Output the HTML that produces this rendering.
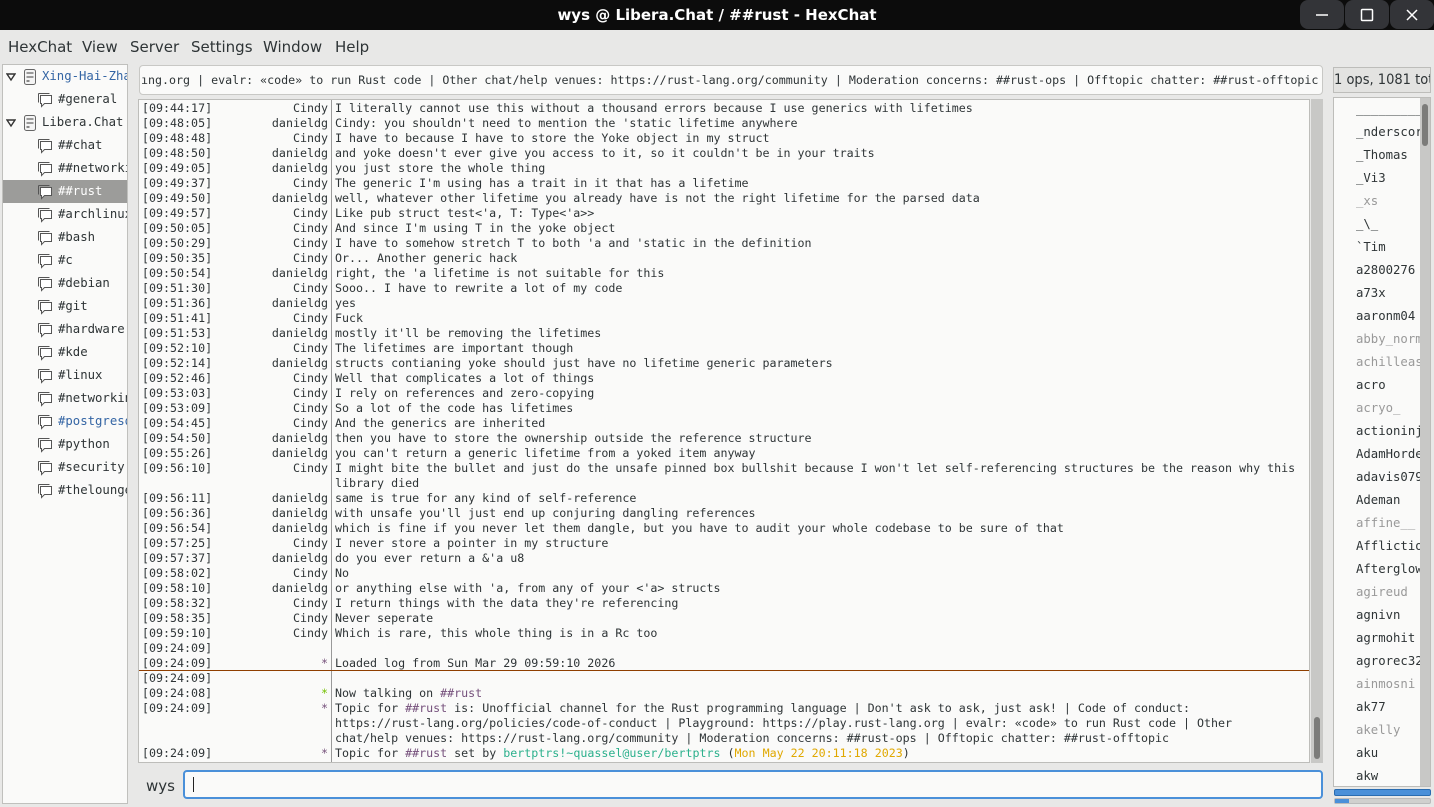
<!DOCTYPE html>
<html><head><meta charset="utf-8"><style>
*{margin:0;padding:0;box-sizing:border-box}
body{width:1434px;height:807px;background:#e8e8e7;font-family:"DejaVu Sans Mono","Liberation Mono",monospace;color:#2e3436;position:relative;overflow:hidden}
.abs{position:absolute}
#title{left:0;top:0;width:1434px;height:30px;background:#0c0c0c;color:#fff;font:bold 15px "DejaVu Sans","Liberation Sans",sans-serif;text-align:center;line-height:30px}
.wb{top:0;width:44px;height:29px;background:#333438;border-radius:8px}
.wb svg{position:absolute;left:14px;top:7px}
#menu{left:0;top:30px;height:32px;width:1434px;font:15px "DejaVu Sans","Liberation Sans",sans-serif;color:#2e3436}
#menu span{position:absolute;top:8px}
#tree{left:2px;top:64px;width:126px;height:740px;background:#fafaf9;border:1px solid #c0c0bd;overflow:hidden;font-size:12.3px}
.ti{position:absolute;height:23px;line-height:23px;white-space:nowrap;left:0;width:126px}
.ti svg{position:absolute;top:4px}
.tx{position:absolute;left:55px}
.sx{position:absolute;left:39px}
#topic{left:139px;top:65px;width:1184px;height:30px;background:#fafaf9;border:1px solid #c8c8c5;border-radius:4px;font-size:11.65px;line-height:28px;white-space:nowrap;overflow:hidden;padding-left:1px}
#chat{left:138px;top:99px;width:1172px;height:664px;background:#fafaf9;border:1px solid #bdbdba;overflow:hidden;font-size:11.65px}
.r{position:absolute;left:0;height:15px;line-height:15px;white-space:pre;width:1170px}
.t{position:absolute;left:3px}
.n{position:absolute;left:0;width:189px;text-align:right}
.m{position:absolute;left:196px}
#sep{left:192px;top:0;width:1px;height:664px;background:#999}
#sb{left:1311px;top:99px;width:12px;height:664px;background:#c8c8c6}
#input{left:183px;top:770px;width:1140px;height:29px;background:#fafaf9;border:2px solid #4a90d9;border-radius:4px}
#ul{left:1333px;top:67px;width:98px;height:26px;border:1px solid #bdbdba;background:#e3e3e1;font:14.5px "DejaVu Sans Condensed","Liberation Sans Narrow","Liberation Sans",sans-serif;line-height:24px;white-space:nowrap;overflow:hidden}
#nl{left:1333px;top:97px;width:98px;height:690px;background:#fafaf9;border:1px solid #bdbdba;overflow:hidden;font-size:12.3px}
.u{position:absolute;left:22px;height:23px;line-height:23px;white-space:nowrap}
.g{color:#999}
</style></head><body>
<svg width="0" height="0" style="position:absolute"><defs>
<symbol id="bub" viewBox="0 0 16 16"><path d="M3.5 3.5h11v8h-7l-3 3v-3h-1z" fill="#fff" stroke="#555" stroke-width="1"/><path d="M1.5 1.5h11" stroke="#555" fill="none"/><path d="M1.5 1.5v9" stroke="#555"/></symbol>
<symbol id="srv" viewBox="0 0 14 16"><rect x="1.5" y="0.5" width="11" height="15" rx="2" fill="#f4f4f4" stroke="#666"/><rect x="3.5" y="3" width="7" height="2" fill="#999"/><rect x="3.5" y="7" width="7" height="2" fill="#999"/><rect x="3.5" y="11" width="3" height="2" fill="#888"/></symbol>
<symbol id="tri" viewBox="0 0 10 10"><path d="M1 2h8L5 8z" fill="none" stroke="#333" stroke-width="1.4"/></symbol>
</defs></svg>
<div id="title" class="abs">wys @ Libera.Chat / ##rust - HexChat</div>
<div class="abs wb" style="left:1300px"><svg width="16" height="16"><path d="M2 8h12" stroke="#fff" stroke-width="1.5"/></svg></div>
<div class="abs wb" style="left:1345px"><svg width="16" height="16"><rect x="2.5" y="2.5" width="11" height="11" rx="1" fill="none" stroke="#fff" stroke-width="1.5"/></svg></div>
<div class="abs wb" style="left:1390px"><svg width="16" height="16"><path d="M3 3l10 10M13 3L3 13" stroke="#fff" stroke-width="1.5"/></svg></div>
<div id="menu" class="abs"><span style="left:8px">HexChat</span><span style="left:82px">View</span><span style="left:130px">Server</span><span style="left:191px">Settings</span><span style="left:263px">Window</span><span style="left:335px">Help</span></div>

<div id="tree" class="abs">
<div class="ti" style="top:0"><svg style="left:3px;top:7px" width="10" height="10"><use href="#tri"/></svg><svg style="left:20px" width="14" height="16"><use href="#srv"/></svg><span class="sx" style="color:#3465a4">Xing-Hai-Zhang</span></div>
<div class="ti" style="top:23px"><svg style="left:34px" width="16" height="16"><use href="#bub"/></svg><span class="tx">#general</span></div>
<div class="ti" style="top:46px"><svg style="left:3px;top:7px" width="10" height="10"><use href="#tri"/></svg><svg style="left:20px" width="14" height="16"><use href="#srv"/></svg><span class="sx">Libera.Chat</span></div>
<div class="ti" style="top:69px"><svg style="left:34px" width="16" height="16"><use href="#bub"/></svg><span class="tx">##chat</span></div>
<div class="ti" style="top:92px"><svg style="left:34px" width="16" height="16"><use href="#bub"/></svg><span class="tx">##networking</span></div>
<div class="ti" style="top:115px;background:#9c9c9a;color:#fff"><svg style="left:34px" width="16" height="16"><use href="#bub"/></svg><span class="tx">##rust</span></div>
<div class="ti" style="top:138px"><svg style="left:34px" width="16" height="16"><use href="#bub"/></svg><span class="tx">#archlinux</span></div>
<div class="ti" style="top:161px"><svg style="left:34px" width="16" height="16"><use href="#bub"/></svg><span class="tx">#bash</span></div>
<div class="ti" style="top:184px"><svg style="left:34px" width="16" height="16"><use href="#bub"/></svg><span class="tx">#c</span></div>
<div class="ti" style="top:207px"><svg style="left:34px" width="16" height="16"><use href="#bub"/></svg><span class="tx">#debian</span></div>
<div class="ti" style="top:230px"><svg style="left:34px" width="16" height="16"><use href="#bub"/></svg><span class="tx">#git</span></div>
<div class="ti" style="top:253px"><svg style="left:34px" width="16" height="16"><use href="#bub"/></svg><span class="tx">#hardware</span></div>
<div class="ti" style="top:276px"><svg style="left:34px" width="16" height="16"><use href="#bub"/></svg><span class="tx">#kde</span></div>
<div class="ti" style="top:299px"><svg style="left:34px" width="16" height="16"><use href="#bub"/></svg><span class="tx">#linux</span></div>
<div class="ti" style="top:322px"><svg style="left:34px" width="16" height="16"><use href="#bub"/></svg><span class="tx">#networking</span></div>
<div class="ti" style="top:345px;color:#3465a4"><svg style="left:34px" width="16" height="16"><use href="#bub"/></svg><span class="tx">#postgresql</span></div>
<div class="ti" style="top:368px"><svg style="left:34px" width="16" height="16"><use href="#bub"/></svg><span class="tx">#python</span></div>
<div class="ti" style="top:391px"><svg style="left:34px" width="16" height="16"><use href="#bub"/></svg><span class="tx">#security</span></div>
<div class="ti" style="top:414px"><svg style="left:34px" width="16" height="16"><use href="#bub"/></svg><span class="tx">#thelounge</span></div>
</div>

<div id="topic" class="abs">ıng.org | evalr: «code» to run Rust code | Other chat/help venues: https://rust-lang.org/community | Moderation concerns: ##rust-ops | Offtopic chatter: ##rust-offtopic</div>

<div id="chat" class="abs">
<div id="sep" class="abs"></div>
<div class="r" style="top:1px"><span class="t">[09:44:17]</span><span class="n">Cindy</span><span class="m">I literally cannot use this without a thousand errors because I use generics with lifetimes</span></div>
<div class="r" style="top:16px"><span class="t">[09:48:05]</span><span class="n">danieldg</span><span class="m">Cindy: you shouldn't need to mention the 'static lifetime anywhere</span></div>
<div class="r" style="top:31px"><span class="t">[09:48:48]</span><span class="n">Cindy</span><span class="m">I have to because I have to store the Yoke object in my struct</span></div>
<div class="r" style="top:46px"><span class="t">[09:48:50]</span><span class="n">danieldg</span><span class="m">and yoke doesn't ever give you access to it, so it couldn't be in your traits</span></div>
<div class="r" style="top:61px"><span class="t">[09:49:05]</span><span class="n">danieldg</span><span class="m">you just store the whole thing</span></div>
<div class="r" style="top:76px"><span class="t">[09:49:37]</span><span class="n">Cindy</span><span class="m">The generic I'm using has a trait in it that has a lifetime</span></div>
<div class="r" style="top:91px"><span class="t">[09:49:50]</span><span class="n">danieldg</span><span class="m">well, whatever other lifetime you already have is not the right lifetime for the parsed data</span></div>
<div class="r" style="top:106px"><span class="t">[09:49:57]</span><span class="n">Cindy</span><span class="m">Like pub struct test&lt;'a, T: Type&lt;'a&gt;&gt;</span></div>
<div class="r" style="top:121px"><span class="t">[09:50:05]</span><span class="n">Cindy</span><span class="m">And since I'm using T in the yoke object</span></div>
<div class="r" style="top:136px"><span class="t">[09:50:29]</span><span class="n">Cindy</span><span class="m">I have to somehow stretch T to both 'a and 'static in the definition</span></div>
<div class="r" style="top:151px"><span class="t">[09:50:35]</span><span class="n">Cindy</span><span class="m">Or... Another generic hack</span></div>
<div class="r" style="top:166px"><span class="t">[09:50:54]</span><span class="n">danieldg</span><span class="m">right, the 'a lifetime is not suitable for this</span></div>
<div class="r" style="top:181px"><span class="t">[09:51:30]</span><span class="n">Cindy</span><span class="m">Sooo.. I have to rewrite a lot of my code</span></div>
<div class="r" style="top:196px"><span class="t">[09:51:36]</span><span class="n">danieldg</span><span class="m">yes</span></div>
<div class="r" style="top:211px"><span class="t">[09:51:41]</span><span class="n">Cindy</span><span class="m">Fuck</span></div>
<div class="r" style="top:226px"><span class="t">[09:51:53]</span><span class="n">danieldg</span><span class="m">mostly it'll be removing the lifetimes</span></div>
<div class="r" style="top:241px"><span class="t">[09:52:10]</span><span class="n">Cindy</span><span class="m">The lifetimes are important though</span></div>
<div class="r" style="top:256px"><span class="t">[09:52:14]</span><span class="n">danieldg</span><span class="m">structs contianing yoke should just have no lifetime generic parameters</span></div>
<div class="r" style="top:271px"><span class="t">[09:52:46]</span><span class="n">Cindy</span><span class="m">Well that complicates a lot of things</span></div>
<div class="r" style="top:286px"><span class="t">[09:53:03]</span><span class="n">Cindy</span><span class="m">I rely on references and zero-copying</span></div>
<div class="r" style="top:301px"><span class="t">[09:53:09]</span><span class="n">Cindy</span><span class="m">So a lot of the code has lifetimes</span></div>
<div class="r" style="top:316px"><span class="t">[09:54:45]</span><span class="n">Cindy</span><span class="m">And the generics are inherited</span></div>
<div class="r" style="top:331px"><span class="t">[09:54:50]</span><span class="n">danieldg</span><span class="m">then you have to store the ownership outside the reference structure</span></div>
<div class="r" style="top:346px"><span class="t">[09:55:26]</span><span class="n">danieldg</span><span class="m">you can't return a generic lifetime from a yoked item anyway</span></div>
<div class="r" style="top:361px"><span class="t">[09:56:10]</span><span class="n">Cindy</span><span class="m">I might bite the bullet and just do the unsafe pinned box bullshit because I won't let self-referencing structures be the reason why this</span></div>
<div class="r" style="top:376px"><span class="m">library died</span></div>
<div class="r" style="top:391px"><span class="t">[09:56:11]</span><span class="n">danieldg</span><span class="m">same is true for any kind of self-reference</span></div>
<div class="r" style="top:406px"><span class="t">[09:56:36]</span><span class="n">danieldg</span><span class="m">with unsafe you'll just end up conjuring dangling references</span></div>
<div class="r" style="top:421px"><span class="t">[09:56:54]</span><span class="n">danieldg</span><span class="m">which is fine if you never let them dangle, but you have to audit your whole codebase to be sure of that</span></div>
<div class="r" style="top:436px"><span class="t">[09:57:25]</span><span class="n">Cindy</span><span class="m">I never store a pointer in my structure</span></div>
<div class="r" style="top:451px"><span class="t">[09:57:37]</span><span class="n">danieldg</span><span class="m">do you ever return a &amp;'a u8</span></div>
<div class="r" style="top:466px"><span class="t">[09:58:02]</span><span class="n">Cindy</span><span class="m">No</span></div>
<div class="r" style="top:481px"><span class="t">[09:58:10]</span><span class="n">danieldg</span><span class="m">or anything else with 'a, from any of your &lt;'a&gt; structs</span></div>
<div class="r" style="top:496px"><span class="t">[09:58:32]</span><span class="n">Cindy</span><span class="m">I return things with the data they're referencing</span></div>
<div class="r" style="top:511px"><span class="t">[09:58:35]</span><span class="n">Cindy</span><span class="m">Never seperate</span></div>
<div class="r" style="top:526px"><span class="t">[09:59:10]</span><span class="n">Cindy</span><span class="m">Which is rare, this whole thing is in a Rc too</span></div>
<div class="r" style="top:541px"><span class="t">[09:24:09]</span></div>
<div class="r" style="top:556px"><span class="t">[09:24:09]</span><span class="n" style="color:#75507b">*</span><span class="m">Loaded log from Sun Mar 29 09:59:10 2026</span></div>
<div class="abs" style="left:0;top:570px;width:1170px;height:1px;background:#8f3f00"></div>
<div class="r" style="top:571px"><span class="t">[09:24:09]</span></div>
<div class="r" style="top:586px"><span class="t">[09:24:08]</span><span class="n" style="color:#73c000">*</span><span class="m">Now talking on <span style="color:#75507b">##rust</span></span></div>
<div class="r" style="top:601px"><span class="t">[09:24:09]</span><span class="n" style="color:#75507b">*</span><span class="m">Topic for <span style="color:#75507b">##rust</span> is: Unofficial channel for the Rust programming language | Don't ask to ask, just ask! | Code of conduct:</span></div>
<div class="r" style="top:616px"><span class="m">https://rust-lang.org/policies/code-of-conduct | Playground: https://play.rust-lang.org | evalr: «code» to run Rust code | Other</span></div>
<div class="r" style="top:631px"><span class="m">chat/help venues: https://rust-lang.org/community | Moderation concerns: ##rust-ops | Offtopic chatter: ##rust-offtopic</span></div>
<div class="r" style="top:646px"><span class="t">[09:24:09]</span><span class="n" style="color:#75507b">*</span><span class="m">Topic for <span style="color:#75507b">##rust</span> set by <span style="color:#2bb08c">bertptrs!~quassel@user/bertptrs</span> (<span style="color:#e0a800">Mon May 22 20:11:18 2023</span>)</span></div>
</div>
<div id="sb" class="abs"><div class="abs" style="left:3px;top:618px;width:6px;height:42px;background:#7c7c7a;border-radius:3px"></div></div>

<div class="abs" style="left:146px;top:777px;font:15px 'DejaVu Sans',sans-serif">wys</div>
<div id="input" class="abs"><div class="abs" style="left:8px;top:5px;width:1px;height:15px;background:#222"></div></div>

<div id="ul" class="abs">1 ops, 1081 total</div>
<div id="nl" class="abs">
<div class="u" style="top:0">__________</div>
<div class="u" style="top:23px">_nderscore</div>
<div class="u" style="top:46px">_Thomas</div>
<div class="u" style="top:69px">_Vi3</div>
<div class="u g" style="top:92px">_xs</div>
<div class="u" style="top:115px">_\_</div>
<div class="u" style="top:138px">`Tim</div>
<div class="u" style="top:161px">a2800276</div>
<div class="u" style="top:184px">a73x</div>
<div class="u" style="top:207px">aaronm04</div>
<div class="u g" style="top:230px">abby_normal</div>
<div class="u g" style="top:253px">achilleas</div>
<div class="u" style="top:276px">acro</div>
<div class="u g" style="top:299px">acryo_</div>
<div class="u" style="top:322px">actioninja</div>
<div class="u" style="top:345px">AdamHorden</div>
<div class="u" style="top:368px">adavis0791</div>
<div class="u" style="top:391px">Ademan</div>
<div class="u g" style="top:414px">affine__</div>
<div class="u" style="top:437px">Affliction</div>
<div class="u" style="top:460px">Afterglow</div>
<div class="u g" style="top:483px">agireud</div>
<div class="u" style="top:506px">agnivn</div>
<div class="u" style="top:529px">agrmohit</div>
<div class="u" style="top:552px">agrorec32</div>
<div class="u g" style="top:575px">ainmosni</div>
<div class="u" style="top:598px">ak77</div>
<div class="u g" style="top:621px">akelly</div>
<div class="u" style="top:644px">aku</div>
<div class="u" style="top:667px">akw</div>
<div class="abs" style="left:86px;top:0;width:11px;height:690px;background:#c8c8c6"><div class="abs" style="left:2px;top:6px;width:6px;height:42px;background:#7c7c7a;border-radius:3px"></div></div>
</div>
<div class="abs" style="left:1334px;top:789px;width:97px;height:7px;background:#4a90d9;border:1px solid #2a6cb0;border-radius:2px"></div>
<div class="abs" style="left:1334px;top:798px;width:97px;height:6px;background:#d0d0ce;border:1px solid #bbb;border-radius:2px"><div style="width:14px;height:4px;background:#4a90d9"></div></div>
</body></html>
